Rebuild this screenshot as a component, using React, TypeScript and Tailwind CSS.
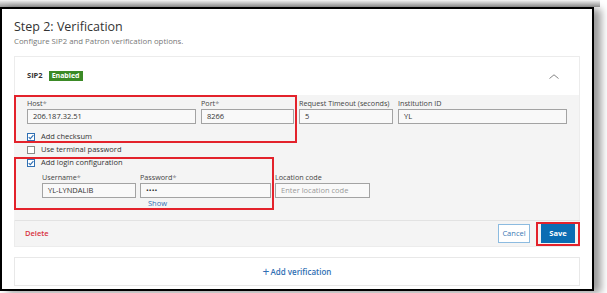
import React from 'react'

const font = { fontFamily: '"Open Sans", "Noto Sans", sans-serif' }

function Check({ checked }: { checked: boolean }) {
  return (
    <span
      className={
        'flex h-[8px] w-[8px] shrink-0 items-center justify-center border ' +
        (checked ? 'border-[#2f6fb3] bg-white' : 'border-[#8a8a8a] bg-white')
      }
    >
      {checked && (
        <svg width="7" height="6" viewBox="0 0 7 6">
          <path d="M0.8 3.2 L2.7 5 L6.3 0.9" fill="none" stroke="#2f6fb3" strokeWidth="1.3" />
        </svg>
      )}
    </span>
  )
}

function Field({
  label,
  value,
  required,
  placeholder,
  width,
}: {
  label: string
  value?: string
  required?: boolean
  placeholder?: string
  width: string
}) {
  return (
    <div className={'flex flex-col ' + width}>
      <div className="h-[10px] whitespace-nowrap text-[7.2px] leading-[10px] text-[#444]">
        {label}
        {required && <span className="text-[#888]">*</span>}
      </div>
      <div className="mt-[1px] flex h-[15px] items-center border border-[#a3a3a3] bg-[#f9f9f9] px-[5px] text-[7.5px] text-[#333]">
        {value ? value : <span className="text-[#9a9a9a]">{placeholder}</span>}
      </div>
    </div>
  )
}

export default function App() {
  return (
    <div className="h-[293px] w-[607px] overflow-hidden bg-white" style={font}>
      <div className="h-[7px] w-[600px] bg-gradient-to-b from-[#f4f4f4] to-[#9a9a9a]" />
      <div className="flex h-[284px] w-[594px] flex-col border-2 border-black bg-white px-3 shadow-[7px_2px_8px_rgba(0,0,0,0.4)]">
        <div className="pt-[10px] text-[12.5px] leading-[16px] text-[#333]">Step 2: Verification</div>
        <div className="mt-[1px] text-[7.8px] leading-[10px] text-[#777]">
          Configure SIP2 and Patron verification options.
        </div>

        {/* SIP2 card */}
        <div className="mt-[10px] flex flex-col border border-[#ececec]">
          <div className="flex h-[38px] items-center bg-white pl-[12px] pr-[20px]">
            <span className="text-[7.5px] font-bold text-[#333]">SIP2</span>
            <span className="ml-[6px] flex h-[10px] items-center bg-[#3b8a26] px-[3px] text-[7px] font-bold text-white">
              Enabled
            </span>
            <svg className="ml-auto" width="10" height="5" viewBox="0 0 10 5">
              <path d="M0.5 4.5 L5 0.8 L9.5 4.5" fill="none" stroke="#777" strokeWidth="0.9" />
            </svg>
          </div>

          <div className="-ml-px flex flex-col bg-[#f4f4f4] pb-[10px]">
            <div className="flex items-start">
              <div className="flex h-[48px] w-[283px] flex-col border-2 border-[#e3222b] pl-[11px] pt-[1px]">
                <div className="flex gap-[5px]">
                  <Field label="Host" required value="206.187.32.51" width="w-[169px]" />
                  <Field label="Port" required value="8266" width="w-[93px]" />
                </div>
                <div className="mt-[9px] flex h-[8px] items-center gap-[6px] text-[7.5px] text-[#333]">
                  <Check checked />
                  Add checksum
                </div>
              </div>
              <div className="ml-[2px] pt-[3px]">
                <Field label="Request Timeout (seconds)" value="5" width="w-[94px]" />
              </div>
              <div className="ml-[5px] pt-[3px]">
                <Field label="Institution ID" value="YL" width="w-[169px]" />
              </div>
            </div>

            <div className="mt-[3px] flex h-[8px] items-center gap-[6px] pl-[13px] text-[7.5px] text-[#333]">
              <Check checked={false} />
              Use terminal password
            </div>

            <div className="mt-[3px] flex items-start">
              <div className="flex h-[53px] w-[260px] flex-col border-2 border-[#e3222b] pl-[11px]">
                <div className="flex h-[8px] items-center gap-[6px] text-[7.5px] text-[#333]">
                  <Check checked />
                  Add login configuration
                </div>
                <div className="mt-[5px] flex gap-[4px] pl-[15px]">
                  <Field label="Username" required value="YL-LYNDALIB" width="w-[94px]" />
                  <div className="flex flex-col">
                    <Field label="Password" required value="••••" width="w-[131px]" />
                    <div className="pl-[8px] text-[7.5px] leading-[10px] text-[#2f6fb3]">Show</div>
                  </div>
                </div>
              </div>
              <div className="ml-[1px] pt-[15px]">
                <Field label="Location code" placeholder="Enter location code" width="w-[95px]" />
              </div>
            </div>
          </div>

          <div className="-mr-px flex h-[26px] items-center border-t border-[#e2e2e2] bg-[#f4f4f4] pl-[10px]">
            <span className="text-[7.5px] font-semibold text-[#d9333f]">Delete</span>
            <button className="ml-auto flex h-[19px] w-[32px] items-center justify-center border border-[#8cbbe0] bg-white text-[7.5px] text-[#3a78b4]">
              Cancel
            </button>
            <div className="ml-[6px] flex h-[24px] items-center border-2 border-[#e3222b] px-[3px]">
              <button className="flex h-[19px] w-[34px] items-center justify-center bg-[#0b6db3] text-[7.5px] font-bold text-white">
                Save
              </button>
            </div>
          </div>
        </div>

        <div className="mt-[10px] flex h-[29px] items-center justify-center border border-[#e8e8e8] bg-white text-[8px] font-semibold text-[#2f6fb3]">
          <span className="mr-[1px] text-[12px] font-normal leading-none">+</span>
          Add verification
        </div>
      </div>
    </div>
  )
}
